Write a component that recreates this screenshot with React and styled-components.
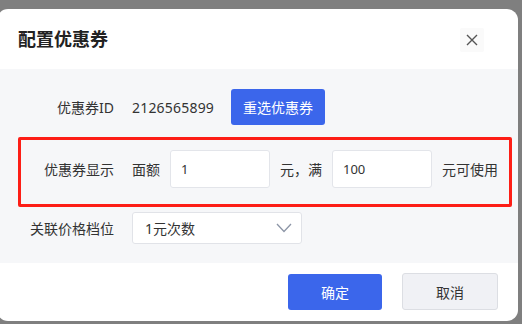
import React from 'react';
import styled, { createGlobalStyle } from 'styled-components';

const GlobalStyle = createGlobalStyle`
	html, body {
		margin: 0;
		padding: 0;
		background: #7f7f7f;
		font-family: "Noto Sans", "Noto Sans CJK SC", sans-serif;
		overflow: hidden;
	}
`;

const App = () => {
	return (
		<>
			<GlobalStyle />
			<Modal>
				<Header>
					<Title>配置优惠券</Title>
					<CloseButton aria-label="close">
						<svg width="12" height="12" viewBox="0 0 12 12">
							<path d="M1 1 L11 11 M11 1 L1 11" stroke="#555" strokeWidth="1.4" fill="none" />
						</svg>
					</CloseButton>
				</Header>
				<Body>
					<Field $labelWidth={117}>
						<Label>优惠券ID</Label>
						<Content>
							<Value>2126565899</Value>
							<PrimaryButton $width={94}>重选优惠券</PrimaryButton>
						</Content>
					</Field>
					<Highlight>
						<Field $labelWidth={93}>
							<Label>优惠券显示</Label>
							<Content>
								<Text>面额</Text>
								<Input defaultValue="1" />
								<Text>元，满</Text>
								<Input defaultValue="100" />
								<Text>元可使用</Text>
							</Content>
						</Field>
					</Highlight>
					<Field $labelWidth={117}>
						<Label>关联价格档位</Label>
						<Content>
							<Select>
								<span>1元次数</span>
								<svg width="16" height="10" viewBox="0 0 16 10">
									<path d="M1 1 L8 8.5 L15 1" stroke="#8c95a6" strokeWidth="1.3" fill="none" />
								</svg>
							</Select>
						</Content>
					</Field>
				</Body>
				<Footer>
					<PrimaryButton $width={94}>确定</PrimaryButton>
					<SecondaryButton>取消</SecondaryButton>
				</Footer>
			</Modal>
		</>
	);
};

const Modal = styled.div`
	margin: 9px 0 0 -3px;
	width: 521px;
	height: 312px;
	background: #fff;
	border-radius: 11px;
	overflow: hidden;
	display: flex;
	flex-direction: column;
`;

const Header = styled.div`
	height: 60px;
	display: flex;
	align-items: center;
	justify-content: space-between;
	padding: 0 34px 0 21px;
	box-sizing: border-box;
`;

const Title = styled.h2`
	margin: 0;
	font-size: 18px;
	font-weight: 700;
	color: #222;
	padding-bottom: 2px;
`;

const CloseButton = styled.button`
	width: 24px;
	height: 24px;
	margin-top: 2px;
	border: none;
	border-radius: 2px;
	background: #fafafa;
	display: flex;
	align-items: center;
	justify-content: center;
	padding: 0;
`;

const Body = styled.div`
	background: #f6f7f9;
	padding: 20px 0;
	height: 194px;
	box-sizing: border-box;
	display: flex;
	flex-direction: column;
`;

const Field = styled.div`
	display: grid;
	grid-template-columns: ${(p) => p.$labelWidth}px 1fr;
	column-gap: 18px;
	align-items: center;
`;

const Label = styled.div`
	text-align: right;
	font-size: 14px;
	color: #333;
`;

const Content = styled.div`
	display: flex;
	align-items: center;
	gap: 10px;
	font-size: 14px;
	color: #333;
`;

const Value = styled.span`
	font-size: 14px;
	letter-spacing: 0.2px;
	color: #333;
	margin-right: 7px;
`;

const Text = styled.span`
	font-size: 14px;
	color: #333;
`;

const Highlight = styled.div`
	margin: 12px 6px 5px 21px;
	padding: 10px 0 16px;
	border: 3px solid #fd1e16;
	border-radius: 2px;
`;

const Input = styled.input`
	width: 100px;
	height: 38px;
	box-sizing: border-box;
	border: 1px solid #e3e5ea;
	border-radius: 3px;
	background: #fff;
	padding: 0 10px;
	font-family: "Noto Sans", "Noto Sans CJK SC", sans-serif;
	font-size: 13px;
	color: #333;
	outline: none;
`;

const Select = styled.div`
	width: 170px;
	height: 32px;
	box-sizing: border-box;
	border: 1px solid #e1e3e8;
	border-radius: 3px;
	background: #fff;
	display: flex;
	align-items: center;
	justify-content: space-between;
	padding: 0 9px 0 12px;
	font-size: 14px;
	color: #333;
`;

const PrimaryButton = styled.button`
	width: ${(p) => p.$width}px;
	height: 36px;
	border: none;
	border-radius: 3px;
	background: #3b66eb;
	color: #fff;
	font-family: "Noto Sans", "Noto Sans CJK SC", sans-serif;
	font-size: 14px;
	padding: 0;
`;

const SecondaryButton = styled.button`
	width: 96px;
	height: 37px;
	border: 1px solid #dcdee3;
	border-radius: 3px;
	background: #f0f1f5;
	color: #333;
	font-family: "Noto Sans", "Noto Sans CJK SC", sans-serif;
	font-size: 14px;
	padding: 0;
`;

const Footer = styled.div`
	flex: 1;
	display: flex;
	align-items: center;
	justify-content: flex-end;
	gap: 20px;
	padding: 0 20px 0 0;
	margin-top: -1px;
`;

export default App;
